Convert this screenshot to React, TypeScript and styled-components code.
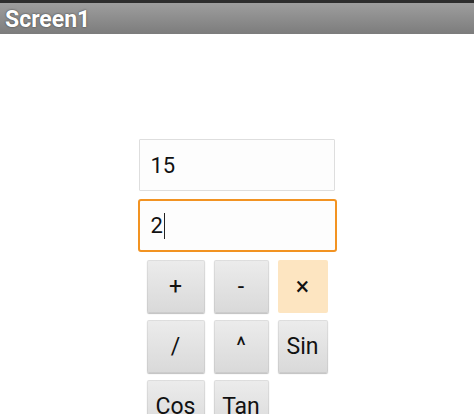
import React from 'react'
import styled, { createGlobalStyle } from 'styled-components'

const GlobalStyle = createGlobalStyle`
  html, body {
    margin: 0;
    padding: 0;
    background: #ffffff;
    font-family: Roboto, "Liberation Sans", Arial, sans-serif;
  }
`

const Page = styled.div`
  width: 474px;
  height: 414px;
  overflow: hidden;
  display: flex;
  flex-direction: column;
`

const TitleBar = styled.div`
  box-sizing: border-box;
  height: 34px;
  border-top: 3px solid #2e2e2e;
  background: linear-gradient(#9e9e9e, #7c7c7c);
  display: flex;
  align-items: center;
  padding-left: 5px;
  padding-top: 1px;
  color: #ffffff;
  font-size: 23px;
  font-weight: bold;
  text-shadow: 0 0 2px #333;
  flex-shrink: 0;
`

const Content = styled.div`
  display: flex;
  flex-direction: column;
  align-items: center;
  padding-top: 105px;
`

const TextBox = styled.div<{ $focused?: boolean }>`
  box-sizing: border-box;
  width: ${(p) => (p.$focused ? '199px' : '196px')};
  height: ${(p) => (p.$focused ? '53px' : '52px')};
  margin-left: ${(p) => (p.$focused ? '0' : '-1px')};
  margin-bottom: ${(p) => (p.$focused ? '0' : '8px')};
  border: ${(p) => (p.$focused ? '2.5px solid #f29322' : '1px solid #dedede')};
  border-radius: ${(p) => (p.$focused ? '3px' : '1px')};
  background: #fdfdfd;
  display: flex;
  align-items: center;
  padding-left: 11px;
  font-size: 22px;
  color: #111;
`

const Caret = styled.span`
  display: inline-block;
  width: 1px;
  height: 26px;
  background: #222;
  margin-left: 1px;
`

const Grid = styled.div`
  display: grid;
  grid-template-columns: 58px 55px 50px;
  grid-auto-rows: 53px;
  column-gap: 9px;
  row-gap: 7px;
  margin-top: 8px;
`

const CalcButton = styled.button<{ $accent?: boolean }>`
  box-sizing: border-box;
  border: none;
  border-radius: 2px;
  background: ${(p) =>
    p.$accent ? '#fde5c1' : 'linear-gradient(#ececec, #d9d9d9)'};
  box-shadow: ${(p) =>
    p.$accent ? 'none' : '0 1px 1px rgba(0,0,0,0.25), inset 0 0 0 1px rgba(0,0,0,0.06)'};
  font-family: Roboto, "Liberation Sans", Arial, sans-serif;
  font-size: ${(p) => (p.$accent ? '25px' : '23px')};
  color: #111;
  padding: 0;
  display: flex;
  align-items: center;
  justify-content: center;
`

const buttons = [
  { label: '+' },
  { label: '-' },
  { label: '×', accent: true },
  { label: '/' },
  { label: '^' },
  { label: 'Sin' },
  { label: 'Cos' },
  { label: 'Tan' },
]

export default function App() {
  return (
    <>
      <GlobalStyle />
      <Page>
        <TitleBar>Screen1</TitleBar>
        <Content>
          <TextBox>15</TextBox>
          <TextBox $focused>
            2<Caret />
          </TextBox>
          <Grid>
            {buttons.map((b) => (
              <CalcButton key={b.label} $accent={b.accent}>
                {b.label}
              </CalcButton>
            ))}
          </Grid>
        </Content>
      </Page>
    </>
  )
}
